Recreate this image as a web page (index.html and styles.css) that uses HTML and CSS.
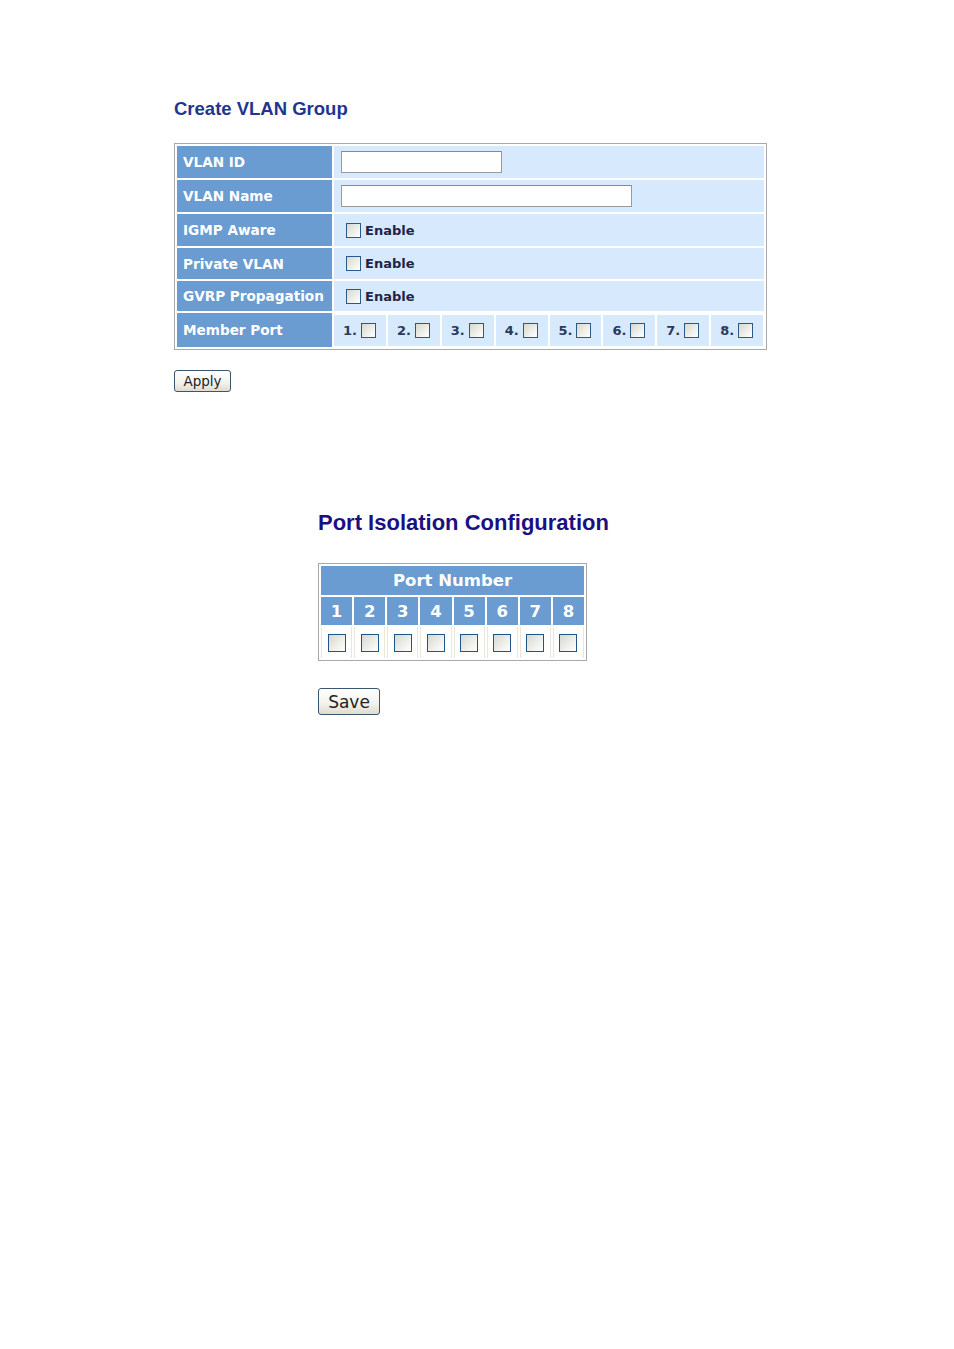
FILE: index.html
```html
<!DOCTYPE html>
<html>
<head>
<meta charset="utf-8">
<title>VLAN</title>
<link rel="stylesheet" href="styles.css">
</head>
<body>
<div class="vlan">
  <h1 class="title">Create VLAN Group</h1>
  <table class="vtable">
    <tr class="r1"><th>VLAN ID</th><td><input class="txt txt-id" type="text"></td></tr>
    <tr class="r2"><th>VLAN Name</th><td><input class="txt txt-name" type="text"></td></tr>
    <tr class="r3"><th>IGMP Aware</th><td><label class="en"><input class="cb" type="checkbox">Enable</label></td></tr>
    <tr class="r4"><th>Private VLAN</th><td><label class="en"><input class="cb" type="checkbox">Enable</label></td></tr>
    <tr class="r5"><th>GVRP Propagation</th><td><label class="en"><input class="cb" type="checkbox">Enable</label></td></tr>
    <tr class="member"><th>Member Port</th><td class="ports">
      <div class="pgrid">
        <label class="pc">1.<input class="cb" type="checkbox"></label>
        <label class="pc">2.<input class="cb" type="checkbox"></label>
        <label class="pc">3.<input class="cb" type="checkbox"></label>
        <label class="pc">4.<input class="cb" type="checkbox"></label>
        <label class="pc">5.<input class="cb" type="checkbox"></label>
        <label class="pc">6.<input class="cb" type="checkbox"></label>
        <label class="pc">7.<input class="cb" type="checkbox"></label>
        <label class="pc">8.<input class="cb" type="checkbox"></label>
      </div>
    </td></tr>
  </table>
  <button class="btn btn-apply" type="button">Apply</button>
</div>

<div class="iso">
  <h2 class="title2">Port Isolation Configuration</h2>
  <table class="ptable">
    <tr><th class="phead" colspan="8">Port Number</th></tr>
    <tr class="nums"><th>1</th><th>2</th><th>3</th><th>4</th><th>5</th><th>6</th><th>7</th><th>8</th></tr>
    <tr class="boxes">
      <td><input class="cb cb-big" type="checkbox"></td>
      <td><input class="cb cb-big" type="checkbox"></td>
      <td><input class="cb cb-big" type="checkbox"></td>
      <td><input class="cb cb-big" type="checkbox"></td>
      <td><input class="cb cb-big" type="checkbox"></td>
      <td><input class="cb cb-big" type="checkbox"></td>
      <td><input class="cb cb-big" type="checkbox"></td>
      <td><input class="cb cb-big" type="checkbox"></td>
    </tr>
  </table>
  <button class="btn btn-save" type="button">Save</button>
</div>
</body>
</html>
```
FILE: styles.css
```css
html, body {
  margin: 0;
  padding: 0;
  background: #ffffff;
}
body {
  font-family: "DejaVu Sans", Verdana, sans-serif;
  width: 954px;
  height: 1349px;
}
.vlan {
  padding: 97px 0 0 174px;
}
.title {
  margin: 0 0 22px 0;
  font-family: "Liberation Sans", Arial, sans-serif;
  font-size: 18.5px;
  line-height: 24px;
  font-weight: bold;
  color: #1f3590;
}
.vtable {
  border: 1px solid #a9a9a9;
  border-spacing: 2px;
  border-collapse: separate;
  width: 593px;
}
.vtable th {
  width: 149px;
  height: 32px;
  padding: 0 0 0 6px;
  background: #6a9bd1;
  color: #ffffff;
  font-size: 13.6px;
  font-weight: bold;
  text-align: left;
  white-space: nowrap;
  vertical-align: middle;
}
.vtable .r4 th { height: 31px; }
.vtable .r5 th { height: 30px; }
.vtable td {
  background: #d7e9fc;
  padding: 0 0 0 7px;
  vertical-align: middle;
}
.txt {
  display: block;
  box-sizing: border-box;
  height: 22px;
  margin: 0;
  border: 1px solid #9a9a9a;
  border-top-color: #8a8a8a;
  background: #ffffff;
}
.txt-id { width: 161px; }
.txt-name { width: 291px; }
.en {
  display: flex;
  align-items: center;
  gap: 4px;
  padding-left: 5px;
  font-size: 13px;
  font-weight: bold;
  color: #1d2448;
}
.cb {
  appearance: none;
  -webkit-appearance: none;
  box-sizing: border-box;
  width: 15px;
  height: 15px;
  margin: 0;
  border: 1px solid #2b5a86;
  background: linear-gradient(135deg, #d8d8d2 0%, #f4f4f0 70%, #ffffff 100%);
  flex: none;
}
.member th { height: 34px; }
.vtable td.ports {
  background: #ffffff;
  padding: 1px 1px 1px 0;
}
.pgrid {
  display: grid;
  grid-template-columns: repeat(8, 1fr);
  column-gap: 2px;
}
.pc {
  display: flex;
  align-items: center;
  gap: 4px;
  height: 31px;
  padding-left: 9px;
  background: #d7e9fc;
  font-size: 13px;
  font-weight: bold;
  color: #2b3a5c;
}
.btn {
  display: block;
  margin: 0;
  padding: 0;
  border: 1px solid #3d5670;
  border-radius: 3px;
  background: linear-gradient(180deg, #ffffff 0%, #f3f2ec 60%, #dedbd0 100%);
  color: #222222;
  font-family: "DejaVu Sans", Verdana, sans-serif;
  box-sizing: border-box;
}
.btn-apply {
  margin-top: 20px;
  width: 57px;
  height: 22px;
  font-size: 13.5px;
  line-height: 18px;
}
.iso {
  padding: 0 0 0 318px;
  margin-top: 118px;
}
.title2 {
  margin: 0 0 27px 0;
  font-family: "Liberation Sans", Arial, sans-serif;
  font-size: 22px;
  line-height: 26px;
  font-weight: bold;
  color: #1b1082;
}
.ptable {
  border: 1px solid #a9a9a9;
  border-spacing: 2px;
  border-collapse: separate;
  width: 269px;
}
.ptable th {
  background: #6a9bd1;
  color: #ffffff;
  font-size: 16.5px;
  font-weight: bold;
  text-align: center;
  padding: 0;
}
.ptable .phead { height: 29px; }
.ptable .nums th { height: 28px; }
.ptable .boxes td {
  height: 31px;
  padding: 0;
  text-align: center;
  vertical-align: middle;
  border: 1px solid #ece6da;
  border-top: none;
  border-bottom: none;
}
.cb-big {
  width: 18px;
  height: 18px;
  display: inline-block;
  vertical-align: middle;
  border-color: #1f5588;
}
.btn-save {
  margin-top: 27px;
  width: 62px;
  height: 27px;
  font-size: 17px;
  line-height: 22px;
}
```
